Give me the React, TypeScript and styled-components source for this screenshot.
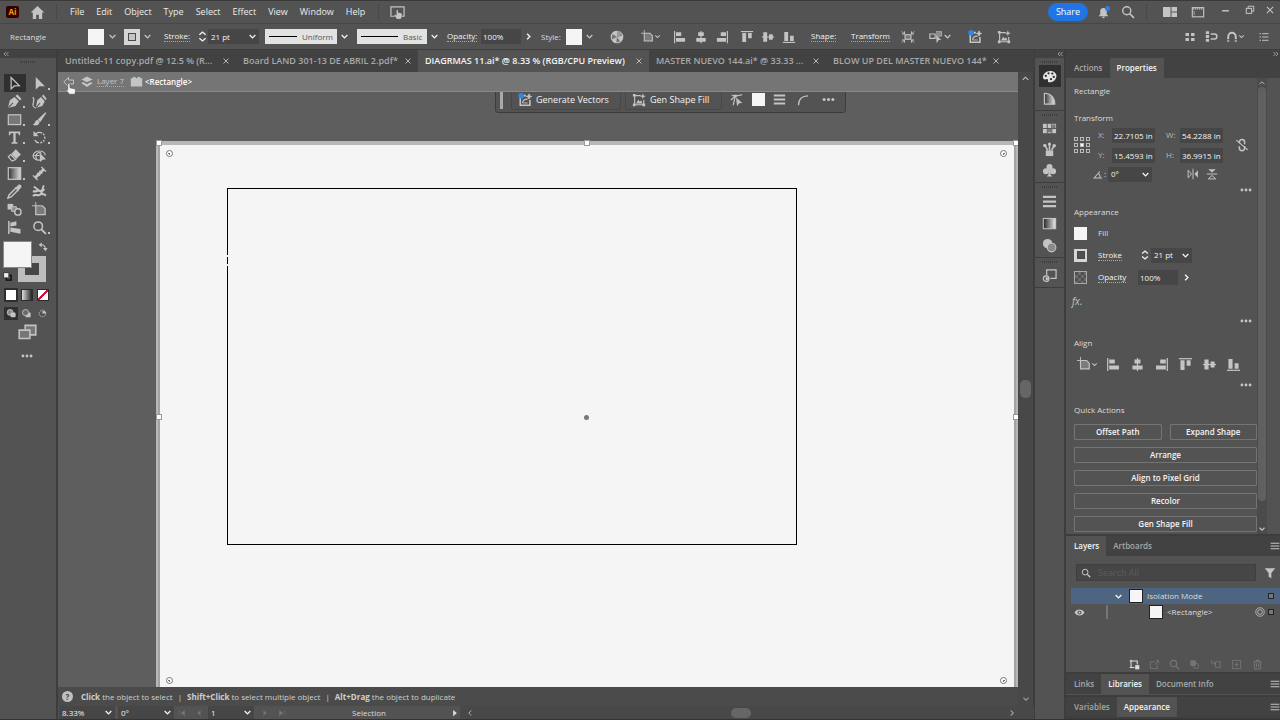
import React from "react";
import styled, { createGlobalStyle, css } from "styled-components";

const c = {
  panel: "#535353",
  bar: "#424242",
  line: "#3d3d3d",
  field: "#464646",
  pasteboard: "#5e5e5e",
  icon: "#c4c4c4",
  text: "#dcdcdc",
  dim: "#a8a8a8",
  bright: "#f4f4f4",
  paper: "#f5f5f5",
  blue: "#1f74e6",
};

const Global = createGlobalStyle`
  * { box-sizing: border-box; }
  body { margin: 0; background: ${c.line}; color: ${c.text}; font: 8px/12px "Open Sans", "Noto Sans", sans-serif; }
  button, input, select { font: inherit; color: inherit; border: 0; background: none; padding: 0; margin: 0; border-radius: 0; min-width: 0; }
  a { color: inherit; text-decoration: none; }
  svg { display: block; flex: none; }
  ul { list-style: none; margin: 0; padding: 0; }
`;

/* ---------- icons ---------- */

const s = { fill: "none", stroke: "currentColor", strokeWidth: 1.3 } as const;

const glyphs: Record<string, React.ReactNode> = {
  home: <path d="M8 1 0.8 8H3v7h3.6v-4.6h2.8V15H13V8h2.2z" fill="currentColor" />,
  touch: <><path d="M5 12H1V2h14v10h-3" {...s} /><path d="M7 5.2v6l-1.6-1-.8.8L7.4 15h4l1.2-3.4V9L8.4 8V5.2z" fill="currentColor" /></>,
  bell: <path d="M2 12.5 4 10V6.6C4 4 5.6 2.6 8 2.6S12 4 12 6.6V10l2 2.5zM6.2 13.3h3.6c0 2.2-3.6 2.2-3.6 0z" fill="currentColor" />,
  search: <><circle cx="6.6" cy="6.6" r="4.6" {...s} strokeWidth="1.6" /><path d="m10 10 4.8 4.8" {...s} strokeWidth="2" /></>,
  workspace: <path d="M1 3h7.5v10H1zM9.5 3H15v4.4H9.5zM9.5 8.6H15V13H9.5z" fill="currentColor" />,
  screen: <><rect x="1.5" y="3" width="13" height="10.5" {...s} /><path d="M2 4.5h12M3.6 7v5" {...s} strokeDasharray="1.5 .8" /></>,
  min: <path d="M2 8.5h12" {...s} strokeWidth="2.6" />,
  restore: <><path d="M5 5V2h9v8h-3" {...s} strokeWidth="1.6" /><rect x="2" y="5.4" width="8.6" height="8" {...s} strokeWidth="1.6" /></>,
  close: <path d="m3 3 10 10M13 3 3 13" {...s} strokeWidth="1.8" />,
  chev: <path d="m3 5.5 5 5 5-5" {...s} strokeWidth="2.4" />,
  chevUp: <path d="m3 10.5 5-5 5 5" {...s} strokeWidth="1.8" />,
  chevRight: <path d="m5.5 3 5 5-5 5" {...s} strokeWidth="2.4" />,
  chevLeft: <path d="m10.5 3-5 5 5 5" {...s} strokeWidth="1.8" />,
  stepper: <path d="m3.5 5.6 4.5-4 4.5 4M3.5 10.4l4.5 4 4.5-4" {...s} strokeWidth="2" />,
  dblLeft: <path d="m8 4-4 4 4 4M13 4 9 8l4 4" {...s} />,
  dblRight: <path d="m3 4 4 4-4 4M8 4l4 4-4 4" {...s} />,
  globe: <><circle cx="8" cy="8" r="6.6" fill="#777" stroke="currentColor" strokeWidth="1.3" /><path d="m8 8-5.500-4A6.800 6.800 0 0 1 8 1.200zM8 8l6.600-1.600A6.800 6.800 0 0 1 12 13.500zM8 8l-1 6.700A6.800 6.800 0 0 1 1.800 11z" fill="currentColor" /><path d="M8 8V1.200A6.800 6.800 0 0 1 14 5z" fill="#9a9a9a" /></>,
  artboard: <><path d="M4 0v4M0 4h4" {...s} strokeWidth="1" /><path d="M4 4h7l3 3v6.5H4z" fill="#7b7b7b" stroke="currentColor" strokeWidth="1.3" /></>,
  alignL: <><path d="M1.8 1v14" {...s} /><path d="M3.4 2.6h6v4.2h-6zM3.4 9h10.4v4.4H3.4z" fill="currentColor" /></>,
  alignC: <><path d="M8 1v14" {...s} /><path d="M4.8 2.6h6.4v4.2H4.8zM2.6 9h10.8v4.4H2.6z" fill="currentColor" /></>,
  alignR: <><path d="M14.2 1v14" {...s} /><path d="M6.6 2.6h6v4.2h-6zM2.2 9h10.4v4.4H2.2z" fill="currentColor" /></>,
  alignT: <><path d="M1 1.8h14" {...s} /><path d="M2.6 3.4H7v10.4H2.6zM9.2 3.4h4.2v6H9.2z" fill="currentColor" /></>,
  alignM: <><path d="M1 8h14" {...s} /><path d="M2.6 2.6H7v10.8H2.6zM9.2 4.8h4.2v6.4H9.2z" fill="currentColor" /></>,
  alignB: <><path d="M1 14.2h14" {...s} /><path d="M2.6 2.2H7v10.4H2.6zM9.2 6.6h4.2v6H9.2z" fill="currentColor" /></>,
  isolate: <><rect x="4.6" y="5.4" width="6.8" height="5.2" fill="#777" stroke="currentColor" strokeWidth="1.3" /><path d="m1 1.600 3 3M15 1.600l-3 3M1 14.400l3-3M15 14.400l-3-3M1 4.600h3v-3M15 4.600h-3v-3M1 11.400h3v3M15 11.400h-3v3" {...s} strokeWidth="1.1" /></>,
  similar: <><path d="M1 4.6h6v5H1zM8 2h6v5" {...s} /><path d="M8 2h6v6H8z" fill="#8b8b8b" /><path d="m8 6 6 5-3 .4L8.8 15z" fill="currentColor" /></>,
  generate: <><path d="M9 3H2.6v11h11V8" {...s} strokeWidth="1.8" /><path d="M5 11.4h6M12.6 1l.8 2.2 2.2.8-2.2.8-.8 2.2-.8-2.2L9.6 4l2.2-.8z" fill="currentColor" stroke="currentColor" /><path d="M5 11c1-3 3-4.400 6-4" {...s} /><circle cx="3.600" cy="3.200" r="3.200" fill="#2f86ea" /></>,
  shapeFill: <><path d="M10 3H3v10.4h10.4V8" {...s} /><path d="M1 1h3v3H1zM1 12h3v3H1zM12 12h3v3h-3z" fill="currentColor" /><path d="m4.6 12 2.6-4.4L9 10l1.4-1.6 1.6 3.6z" fill="currentColor" /><path d="m12.4.4.9 2.4 2.4.9-2.4.9-.9 2.4-.9-2.4-2.4-.9 2.4-.9z" fill="currentColor" /></>,
  snapGrid: <path d="M2 2.600h4.600v4H2zM9.400 2.600H14v4H9.400zM2 9.400h4.600v4H2zM9.400 9.400H14v4H9.400z" fill="currentColor" />,
  snapPoint: <><path d="M1 1.4h4v3.4H1zM1 6.3h4v3.4H1zM1 11.2h4v3.4H1z" fill="currentColor" /><path d="M7 5h4.6a3 3 0 0 1 0 6H7" {...s} strokeWidth="1.8" /></>,
  magnet: <><path d="M3 11V7.400a5 5 0 0 1 10 0V11" {...s} strokeWidth="2.600" /><path d="M1.700 12.400h2.600v1.800H1.700zM11.700 12.400h2.600v1.800h-2.600z" fill="currentColor" /></>,
  list: <path d="M5.5 3.6H14M5.5 8H14M5.5 12.4H14M2 3.6h2M2 8h2M2 12.4h2" {...s} />,
  menu: <path d="M1 3.6h14M1 8h14M1 12.4h14" {...s} strokeWidth="1.6" />,
  lines: <path d="M1 3h14M1 8h14M1 13h14" {...s} strokeWidth="2.4" />,
  select: <path d="M4.4 1.6v12.2l3.4-3.2 5.4-.2z" {...s} />,
  direct: <path d="M4 1v13.4l3.8-3.4 6-.2z" fill="currentColor" />,
  pen: <><path d="m1 15 2-8.4 5-3.4 4.6 4.6L9 12.8z" fill="currentColor" /><path d="m9 2.2 2-1.6 4.4 4.4-1.6 2z" fill="currentColor" /><path d="m1.4 14.6 5-5.2" stroke="#535353" strokeWidth="1.1" /></>,
  curve: <><path d="m4 15 1.6-8.4 4-3.4 4 4.6L11 12.8z" fill="currentColor" /><path d="m10.6 2.2 1.6-1.6 3.4 4.4-1.2 1.6z" fill="currentColor" /><path d="m4.4 14.6 4.2-5" stroke="#535353" strokeWidth="1.1" /><path d="M.8 3.4C3.6 5.6.8 9 1 12c.2 1.6 1.4 2.6 3 3" {...s} /></>,
  rect: <rect x="1.4" y="3" width="13.2" height="10.4" fill="#777" stroke="currentColor" strokeWidth="1.3" />,
  brush: <><path d="M14.8.8 7 8l1.8 1.8z" fill="currentColor" stroke="currentColor" strokeWidth="1.2" /><path d="M6.2 8.6C2.8 8.4 4 12.6.8 13.4c2.8 2.2 7.4.6 7.4-3z" fill="currentColor" /></>,
  type: <path d="M2 1.6h12v4h-1.2L12 3.4H9.2v9.4l2 .5v1.3H4.8v-1.3l2-.5V3.4H4l-.8 2.2H2z" fill="currentColor" />,
  rotate: <><path d="M3.4 5A5.6 5.6 0 1 1 3 10.6" {...s} strokeDasharray="8 1.4 2 1.4 2 1.4 2 1.4 2 1.4" strokeWidth="1.5" /><path d="M1.6 1v5.6h5.6z" fill="currentColor" /></>,
  eraser: <><path d="m9.4 1.4 5.4 5.4-5 5L4.4 6.4z" fill="currentColor" /><path d="m3.8 7-2.4 2.4 4 4.6 3.8-1.6z" {...s} /></>,
  shapeBuild: <><path d="M9 12.600C5 13.600 1 11.400 1.200 8.200 1.400 5 4.800 3 8 3.200c3.400 0 6 2 6 4.400" {...s} /><path d="M1.400 8H8M5.400 12.600C2.400 8.600 6.600 2 10 6" {...s} /><path d="m8 5 7 7-3.600.4L8.600 15z" fill="currentColor" /></>,
  gradient: <><defs><linearGradient id="gr"><stop offset="0" stopColor="#333" /><stop offset="1" stopColor="#ddd" /></linearGradient></defs><rect x="1.4" y="1.8" width="13.2" height="12.4" fill="url(#gr)" stroke="currentColor" strokeWidth="1.3" /></>,
  gradientRev: <><defs><linearGradient id="grr"><stop offset="0" stopColor="#222" /><stop offset="1" stopColor="#eee" /></linearGradient></defs><rect x="1.4" y="2.6" width="13.2" height="11" fill="url(#grr)" stroke="currentColor" strokeWidth="1.1" /></>,
  dimension: <><path d="m3.500 12.500 9-9" {...s} strokeWidth="3" /><path d="m1 10 5 5M10 1l5 5M5.600 7.400l3 3M7.800 5.200l3 3" {...s} strokeWidth="1.500" /></>,
  dropper: <><path d="M9.6 4.2 2.2 11.6 1 15l3.4-1.2 7.4-7.4" {...s} strokeWidth="1.6" /><path d="m8 3.6 1.6-.2L12 1c2-1.4 4.4 1 3 3l-2.4 2.4-.2 1.6z" fill="currentColor" /></>,
  puppet: <><path d="M1 13c3-3.600 5 .8 8-1.800 2-1.800 3.600 0 6 1" {...s} strokeWidth="2.200" /><path d="M1 7.600c3.400 1.400 4.400-1.600 6.800-.4 2 1 3.400.8 5.200-2" {...s} strokeWidth="2.400" /><path d="m2 2.600 5 4M12.500 1.500 9.500 11" {...s} strokeWidth="2" /></>,
  blend: <><path d="M.6 2h6v6h-6z" fill="currentColor" /><path d="M5 5h5v5H5z" fill="#8d8d8d" stroke="currentColor" /><circle cx="11.6" cy="10.6" r="3.4" fill="#535353" stroke="currentColor" strokeWidth="1.5" /></>,
  slice: <><path d="M2 1v14" {...s} strokeWidth="1.600" /><path d="M3.600 3 10 1.400v4.400L3.600 7zM3.600 8l10.800 1.600v5L3.600 12.400z" fill="currentColor" /></>,
  edit3: <><path d="M6 5V2h9v8h-5" fill="#777" stroke="currentColor" strokeWidth="1.3" /><path d="M1 6h9v7H1z" fill="#777" stroke="currentColor" strokeWidth="1.3" /></>,
  swap: <><path d="M4 4.4c5-.4 7.6 2 7.6 6.6" {...s} strokeWidth="1.8" /><path d="M6 .6v7.6L1 4.4zM8 9.6h7.4l-3.6 5z" fill="currentColor" /></>,
  defaults: <><rect x="6" y="6" width="8.4" height="8.4" fill="none" stroke="#111" strokeWidth="2.6" /><rect x="1.4" y="1.4" width="9" height="9" fill="#eee" stroke="#111" /></>,
  drawA: <><circle cx="6" cy="6.4" r="4.2" fill="#8b8b8b" stroke="currentColor" strokeWidth="1.3" /><rect x="6.6" y="6.6" width="7.4" height="7" rx="2" fill="currentColor" /></>,
  drawB: <><rect x="6.6" y="6.6" width="7.4" height="7" rx="1" fill="currentColor" /><circle cx="6.6" cy="6.6" r="4.4" fill="#6a6a6a" stroke="currentColor" strokeWidth="1.3" /></>,
  drawC: <><circle cx="8" cy="8" r="4.8" {...s} strokeDasharray="2 1" /><path d="M8 8h4.6V5L8 4z" fill="currentColor" /></>,
  dots: <><circle cx="2.6" cy="8" r="1.9" fill="currentColor" /><circle cx="8" cy="8" r="1.9" fill="currentColor" /><circle cx="13.4" cy="8" r="1.9" fill="currentColor" /></>,
  back: <path d="M7.4 2 1 8l6.4 6v-3.4H14V5.4H7.4z" {...s} />,
  layers: <path d="m8 .8 7.4 3.8L8 8.4.6 4.6zM2.8 8 .6 9.6 8 14.6l7.4-5L13.2 8 8 11z" fill="currentColor" />,
  group: <path d="M1 4h2.400V2.400h3.600V4h2V2.400h3.600V4H15v10H1z" fill="currentColor" />,
  palette: <path d="M9 2C4 2 1 5.600 1 8.600 1 10.600 2.600 12 4.400 11c1.600-.8 2.400.2 2 1.400-.4 1.400 1 2 2.800 1.600C13 13.400 15.400 10.400 15.400 7.400S12.600 2 9 2zM4 8.600a1.200 1.200 0 1 1 0-2.400 1.200 1.200 0 0 1 0 2.400zm3-2.800a1.200 1.200 0 1 1 0-2.400 1.200 1.200 0 0 1 0 2.400zm4 .2a1.200 1.200 0 1 1 0-2.400 1.200 1.200 0 0 1 0 2.400zm1.600 3.600a1.200 1.200 0 1 1 0-2.400 1.200 1.200 0 0 1 0 2.400zM9.600 12a1.200 1.200 0 1 1 0-2.400 1.200 1.200 0 0 1 0 2.400z" fill="#e4e4e4" fillRule="evenodd" />,
  guide: <><defs><linearGradient id="gg"><stop offset="0" stopColor="#333" /><stop offset="1" stopColor="#e8e8e8" /></linearGradient></defs><path d="M2.6 14V2.4C9 2.4 13.6 7 13.6 14z" fill="url(#gg)" stroke="currentColor" strokeWidth="1.3" /></>,
  swatches: <><rect x="1" y="3" width="14" height="10" fill="currentColor" /><path d="M5.6 3v10M10.4 3v10M1 8h14" stroke="#535353" /><path d="M6.2 8.6h3.6V12H6.2zM11 3.6h3.4v3.8H11z" fill="#777" /></>,
  brushes: <><path d="M4 9h8v6H4z" fill="currentColor" /><path d="M6 9 3 3M8 9V2M10 9l3-5" {...s} strokeWidth="1.7" /><circle cx="3" cy="3.6" r="1.8" fill="currentColor" /><circle cx="8" cy="2.2" r="1.7" fill="currentColor" /><circle cx="13" cy="4" r="1.9" fill="currentColor" /></>,
  club: <><circle cx="8" cy="4.2" r="3.2" fill="currentColor" /><circle cx="4.2" cy="8.8" r="3.2" fill="currentColor" /><circle cx="11.8" cy="8.8" r="3.2" fill="currentColor" /><path d="M7.2 7h1.6l.4 5.6 2 1.8H4.8l2-1.8z" fill="currentColor" /></>,
  transparency: <><circle cx="6" cy="6" r="5" fill="currentColor" /><circle cx="10.2" cy="10.2" r="4.6" fill="#8a8a8a" stroke="currentColor" strokeWidth="1.2" /></>,
  export: <><path d="M5 8V2h10v9H9" {...s} /><circle cx="4.4" cy="11.4" r="3" {...s} /><path d="m4 9 4 2.4-4 2.4z" fill="currentColor" /></>,
  refPoint: <>{[2, 8, 14].flatMap((y) => [2, 8, 14].map((x) => <rect key={`${x}-${y}`} x={x - 1.5} y={y - 1.5} width="3" height="3" fill={x === 8 && y === 8 ? "#fff" : "#535353"} stroke="currentColor" strokeWidth=".9" />))}</>,
  unlink: <><path d="M5 6V4.6a3 3 0 0 1 6 0V7M5 9.5v2a3 3 0 0 0 6 0V9" {...s} strokeWidth="1.7" /><path d="m1.5 2.5 13 11" {...s} /></>,
  angle: <><path d="M13 13H1.6L10 3.6" {...s} strokeWidth="1.5" /><path d="M7.6 6.4c2 1.4 3 3.4 3 6.6" {...s} strokeWidth="1.5" /></>,
  flipH: <><path d="M1.5 3 6 8l-4.5 5z" {...s} /><path d="M14.5 3 10 8l4.5 5z" fill="currentColor" /><path d="M8 1v14" {...s} /></>,
  flipV: <><path d="M3 1.5 8 6l5-4.5z" fill="currentColor" /><path d="M3 14.5 8 10l5 4.5z" {...s} /><path d="M1 8h14" {...s} /></>,
  eye: <><path d="M.8 8C4 2.4 12 2.4 15.2 8 12 13.6 4 13.6.8 8z" fill="#ccc" /><circle cx="8" cy="8" r="3" fill="#535353" /><circle cx="8" cy="8" r="1.4" fill="#ccc" /></>,
  filter: <path d="M1 1.6h14L9.8 8v7l-3.6-2V8z" fill="currentColor" />,
  target: <><circle cx="8" cy="8" r="6.8" {...s} /><circle cx="8" cy="8" r="3.8" {...s} /></>,
  locate: <><path d="M3 1v12M1 3h11v5M1 12.4h7" {...s} strokeWidth="1.6" /><path d="M9 9h6v6H9z" fill="currentColor" /></>,
  collect: <><path d="M9 4H2v10h10V8" {...s} /><path d="m9 8 5-6M10.5 2H14v4" {...s} /></>,
  mask: <><rect x="2" y="2" width="8" height="8" fill="currentColor" /><circle cx="10" cy="10" r="4" {...s} /></>,
  sublayer: <><path d="M2 1v5h5M5 3.6 7.6 6 5 8.4M8 4h7v8H8z" {...s} /></>,
  add: <><path d="M2 2h12v12H2zM8 5v6M5 8h6" {...s} /></>,
  trash: <path d="M2 4h12M6 4V2h4v2M3.5 4v10.5h9V4M6.5 6.5v5.5M9.5 6.5v5.5" {...s} strokeWidth="1.5" />,
  hand: <path d="M5 .8c1 0 1.6.6 1.6 1.6v4l6.2 1.2c1 .2 1.5.9 1.3 2L13.3 15H6L1.400 9.800c1-1.100 1.400-.9 2.200-.2V2.400C3.600 1.400 4 .8 5 .8z" fill="#f2f2f2" stroke="#444" strokeWidth=".7" />,
  points: <><path d="M1 8 6 3.6 14 2M6 3.6 3.6 14M2 2.6l4 1" {...s} /><path d="m7 5 7 6.4-3.6.4L8 15z" fill="currentColor" /><path d="M4.6 2h3v3h-3z" fill="currentColor" /></>,
  corner: <path d="M2 15C2 7 7 2.4 14.6 2.4" {...s} strokeWidth="1.7" />,
  first: <path d="M3 3v10M13 3 6 8l7 5z" fill="currentColor" stroke="currentColor" />,
  prev: <path d="m11 3-6 5 6 5z" fill="currentColor" />,
  next: <path d="m5 3 6 5-6 5z" fill="currentColor" />,
  last: <path d="M13 3v10M3 3l7 5-7 5z" fill="currentColor" stroke="currentColor" />,
};

const Svg = styled.svg<{ $color?: string }>`
  color: ${(p) => p.$color ?? c.icon};
`;

function Icon({ name, size = 14, color }: { name: string; size?: number; color?: string }) {
  return (
    <Svg viewBox="0 0 16 16" width={size} height={size} $color={color} aria-hidden="true">
      {glyphs[name]}
    </Svg>
  );
}

/* ---------- shared parts ---------- */

const IconButton = styled.button<{ $w?: number; $h?: number; $on?: boolean }>`
  display: flex;
  align-items: center;
  justify-content: center;
  flex: none;
  width: ${(p) => p.$w ?? 20}px;
  height: ${(p) => p.$h ?? 18}px;
  background: ${(p) => (p.$on ? "#303030" : "transparent")};
`;

const Cell = styled.div<{ $w?: number }>`
  display: flex;
  align-items: center;
  flex: none;
  width: ${(p) => (p.$w ? `${p.$w}px` : "auto")};
`;

const Swatch = styled.span<{ $size: number }>`
  flex: none;
  width: ${(p) => p.$size}px;
  height: ${(p) => p.$size}px;
  background: ${c.paper};
`;

const StrokeSwatch = styled(Swatch)`
  display: grid;
  place-items: center;
  background: #d6d6d6;
  &::after {
    content: "";
    width: 6px;
    height: 6px;
    background: ${(p) => (p.$size > 14 ? "#c4c4c4" : "#505050")};
    border: 1px solid #4a4a4a;
  }
`;

const Link = styled.a`
  color: ${c.bright};
  border-bottom: 1px dotted #aaa;
  line-height: 10px;
`;

const Field = styled.input<{ $w: number }>`
  width: ${(p) => p.$w}px;
  height: 15px;
  padding: 0 2px;
  background: ${c.field};
  color: ${c.bright};
`;

const SelectBox = styled.span<{ $w: number }>`
  display: grid;
  align-items: center;
  flex: none;
  width: ${(p) => p.$w}px;
  height: 15px;
  background: ${c.field};
  > * { grid-area: 1 / 1; }
  > svg { justify-self: end; margin-right: 2px; pointer-events: none; }
`;

const NativeSelect = styled.select`
  appearance: none;
  width: 100%;
  height: 100%;
  padding-left: 3px;
  color: ${c.bright};
`;

function Select({ label, value, width }: { label: string; value: string; width: number }) {
  return (
    <SelectBox $w={width}>
      <NativeSelect aria-label={label} defaultValue={value}>
        <option>{value}</option>
      </NativeSelect>
      <Icon name="chev" size={9} color={c.bright} />
    </SelectBox>
  );
}

/* ---------- menu bar ---------- */

const Shell = styled.div`
  display: grid;
  grid-template-rows: 24px 26px minmax(0, 1fr);
  height: 100vh;
  min-height: 560px;
  border-bottom: 1px solid #333;
  overflow: hidden;
`;

const MenuBar = styled.header`
  display: flex;
  align-items: center;
  background: ${c.panel};
  border-top: 1px solid #3a3a3a;
  border-bottom: 1px solid #464646;
  padding-left: 6px;
`;

const Logo = styled.span`
  display: grid;
  place-items: center;
  width: 13px;
  height: 12px;
  border-radius: 2px;
  background: #330000;
  color: #ff9a00;
  font-weight: 700;
`;

const Divider = styled.span<{ $m: string }>`
  width: 1px;
  height: 16px;
  margin: ${(p) => p.$m};
  background: #484848;
`;

const MenuItem = styled.button`
  padding: 0 6px;
  font-size: 9px;
  color: #ececec;
`;

const Right = styled.div`
  display: flex;
  align-items: center;
  margin-left: auto;
`;

const Share = styled.button`
  width: 40px;
  height: 18px;
  border-radius: 9px;
  background: ${c.blue};
  color: #fff;
  font-size: 9px;
`;

const BellWrap = styled.span`
  position: relative;
  &::after {
    content: "";
    position: absolute;
    top: 0;
    right: 0;
    width: 5px;
    height: 5px;
    border-radius: 50%;
    background: #2f7fe6;
  }
`;

const WindowButtons = styled.div`
  display: flex;
  align-self: flex-start;
`;

/* ---------- control bar ---------- */

const ControlBar = styled.div`
  display: flex;
  align-items: center;
  background: ${c.panel};
  border-bottom: 1px solid ${c.line};
  padding-left: 10px;
`;

const Profile = styled.span<{ $w: number }>`
  display: flex;
  align-items: center;
  flex: none;
  width: ${(p) => p.$w}px;
  height: 15px;
  padding: 0 4px;
  gap: 5px;
  background: #e2e2e2;
  &::before {
    content: "";
    flex: 1;
    height: 1px;
    background: #000;
  }
  select { appearance: none; color: #555; }
`;

/* ---------- workspace ---------- */

const Workspace = styled.div`
  display: grid;
  grid-template-columns: 56px minmax(0, 1fr) 32px 214px;
  min-height: 0;
`;

const ToolColumn = styled.aside`
  display: flex;
  flex-direction: column;
  background: ${c.panel};
`;

const Strip = styled.div<{ $end?: boolean }>`
  display: flex;
  align-items: center;
  justify-content: ${(p) => (p.$end ? "flex-end" : "flex-start")};
  flex: none;
  height: 8px;
  padding-left: 2px;
  background: ${c.bar};
`;

const Grip = styled.span`
  align-self: center;
  width: 16px;
  height: 2px;
  margin: 3px 0 2px;
  background: repeating-linear-gradient(90deg, #3e3e3e 0 1px, transparent 1px 2px);
`;

const Tools = styled.div`
  display: grid;
  grid-template-columns: 22px 22px;
  column-gap: 3px;
  justify-content: center;
  padding-top: 9px;
  margin-right: 2px;
`;

const ToolButton = styled.button<{ $on?: boolean; $more?: boolean }>`
  display: grid;
  place-items: center;
  position: relative;
  height: 18px;
  background: ${(p) => (p.$on ? "#303030" : "transparent")};
  ${(p) =>
    p.$more &&
    css`
      &::after {
        content: "";
        position: absolute;
        right: 1px;
        bottom: 2px;
        border: 1px solid ${c.icon};
      }
    `}
`;

const FillStroke = styled.div`
  position: relative;
  width: 44px;
  height: 44px;
  margin: 5px 0 0 3px;
`;

const FillChip = styled.button`
  position: absolute;
  left: 0;
  top: 0;
  width: 29px;
  height: 27px;
  background: ${c.paper};
  border: 1px solid #888;
`;

const StrokeChip = styled.button`
  position: absolute;
  left: 15px;
  top: 15px;
  width: 28px;
  height: 26px;
  background: #464646;
  border: 7px solid #bdbdbd;
`;

const ChipIcon = styled.button<{ $x: number; $y: number }>`
  position: absolute;
  left: ${(p) => p.$x}px;
  top: ${(p) => p.$y}px;
`;

const ToolRow = styled.div<{ $h: number }>`
  display: flex;
  align-items: center;
  justify-content: center;
  height: ${(p) => p.$h}px;
  padding-right: 2px;
`;

const Paint = styled.button<{ $bg: string; $on?: boolean }>`
  width: 12px;
  height: 12px;
  margin: 0 2px;
  border: 1px solid #2c2c2c;
  outline: ${(p) => (p.$on ? "1px solid #303030" : "none")};
  background: ${(p) => p.$bg};
`;

/* ---------- document ---------- */

const Document = styled.main`
  display: grid;
  grid-template-rows: 22px minmax(0, 1fr) 13px;
  min-width: 0;
  border-left: 2px solid ${c.line};
`;

const DocTabs = styled.div`
  display: flex;
  background: ${c.bar};
  overflow: hidden;
`;

const DocTab = styled.div<{ $w: number; $on?: boolean }>`
  display: flex;
  align-items: center;
  justify-content: space-between;
  flex: 0 1 ${(p) => p.$w}px;
  padding: 0 4px 1px 7px;
  background: ${(p) => (p.$on ? c.panel : "transparent")};
  color: ${(p) => (p.$on ? c.bright : c.dim)};
  font-weight: 600;
  font-size: 9px;
  white-space: nowrap;
`;

const View = styled.div`
  display: grid;
  grid-template-columns: minmax(0, 1fr) 16px;
  min-height: 0;
`;

const Sheet = styled.div`
  display: flex;
  flex-direction: column;
  min-width: 0;
  min-height: 0;
`;

const IsolationBar = styled.nav`
  display: flex;
  align-items: center;
  flex: none;
  position: relative;
  height: 20px;
  padding-left: 3px;
  background: #757575;
  border-bottom: 1px solid #8a8a8a;
  a { color: ${c.icon}; }
`;

const Crumb = styled.span`
  color: #fff;
  font-weight: 600;
  margin-left: 2px;
`;

const Pointer = styled.span`
  position: absolute;
  left: 7px;
  top: 11px;
  z-index: 2;
`;

const Canvas = styled.div`
  position: relative;
  flex: 1;
  min-height: 0;
  overflow: hidden;
  background: ${c.pasteboard};
`;

const Artboard = styled.div`
  position: absolute;
  left: 98px;
  top: 49px;
  right: 0;
  bottom: -5px;
  background: ${c.paper};
  border: solid #b9b6b9;
  border-width: 4px 2px 4px 2px;
  &::after {
    content: "";
    position: absolute;
    inset: 0;
    border: solid #a3a1a3;
    border-width: 0 2px;
  }
`;

const Shape = styled.div`
  position: absolute;
  left: 169px;
  top: 96px;
  width: 570px;
  height: 357px;
  border: 1px solid #000;
`;

const Gap = styled.span`
  position: absolute;
  left: 169px;
  top: 163px;
  width: 1px;
  height: 11px;
  background: linear-gradient(${c.paper} 0 2px, #000 2px 9px, ${c.paper} 9px);
`;

const Handle = styled.span<{ $x?: number; $y?: number; $right?: boolean }>`
  position: absolute;
  ${(p) => (p.$right ? "right: 0;" : `left: ${p.$x}px;`)}
  top: ${(p) => p.$y}px;
  width: 4px;
  height: 4px;
  background: #fff;
  outline: 1px solid #9a9a9a;
`;

const CornerDot = styled.span<{ $right?: boolean; $bottom?: boolean }>`
  position: absolute;
  ${(p) => (p.$right ? "right: 11px;" : "left: 108px;")}
  ${(p) => (p.$bottom ? "bottom: 3px;" : "top: 58px;")}
  width: 7px;
  height: 7px;
  border: 1px solid #777;
  border-radius: 50%;
  background: radial-gradient(circle, #777 0 1px, #fff 1px);
`;

const Center = styled.span`
  position: absolute;
  left: 526px;
  top: 323px;
  width: 5px;
  height: 5px;
  border-radius: 50%;
  background: #777;
`;

const TaskBar = styled.div`
  position: absolute;
  left: 437px;
  top: -6px;
  display: flex;
  align-items: center;
  width: 351px;
  height: 27px;
  padding-left: 4px;
  background: ${c.panel};
  border: 1px solid #3c3c3c;
  border-radius: 3px;
`;

const TaskGrip = styled.span`
  width: 3px;
  height: 18px;
  margin-right: 8px;
  background: #aaa;
`;

const TaskButton = styled.button<{ $w: number }>`
  display: flex;
  align-items: center;
  gap: 4px;
  flex: none;
  width: ${(p) => p.$w}px;
  height: 20px;
  margin-right: 4px;
  padding-left: 6px;
  border: 1px solid #474747;
  border-radius: 2px;
  color: ${c.bright};
  font-size: 9px;
  white-space: nowrap;
`;

const VScroll = styled.div`
  display: flex;
  flex-direction: column;
  align-items: center;
  justify-content: space-between;
  padding: 2px 0 3px;
  background: #484848;
  border-right: 1px solid ${c.line};
`;

const Thumb = styled.span<{ $w: number; $h: number }>`
  width: ${(p) => p.$w}px;
  height: ${(p) => p.$h}px;
  border-radius: 5px;
  background: #666;
`;

const Hints = styled.div`
  display: flex;
  align-items: center;
  flex: none;
  gap: 5px;
  height: 19px;
  padding-left: 4px;
  background: #4b4b4b;
  color: #cfcfcf;
  white-space: nowrap;
  b { font-weight: 700; }
`;

const Help = styled.button`
  width: 11px;
  height: 11px;
  margin-right: 3px;
  border-radius: 50%;
  background: #c0c0c0;
  color: #444;
  font-weight: 700;
  line-height: 11px;
`;

const Status = styled.div`
  display: flex;
  align-items: center;
  padding-left: 1px;
  background: ${c.panel};
  overflow: hidden;
`;

const Mode = styled.span`
  flex: 0 0 162px;
  text-align: center;
`;

const HScroll = styled.div`
  display: flex;
  align-items: center;
  justify-content: space-between;
  flex: 1;
  height: 100%;
  padding: 0 18px 0 6px;
  background: #484848;
`;

/* ---------- dock ---------- */

const Dock = styled.aside`
  display: flex;
  flex-direction: column;
  background: ${c.panel};
  border-left: 1px solid ${c.line};
  border-right: 2px solid ${c.line};
`;

const DockGroup = styled.div`
  display: flex;
  flex-direction: column;
  align-items: center;
  padding-bottom: 1px;
  border-bottom: 1px solid ${c.line};
`;

/* ---------- panels ---------- */

const Panels = styled.aside`
  display: grid;
  grid-template-rows: 8px minmax(0, 1fr) 138px 23px 22px;
  min-width: 0;
  background: ${c.line};
`;

const Panel = styled.section`
  display: flex;
  flex-direction: column;
  min-height: 0;
  margin-bottom: 2px;
  background: ${c.panel};
  overflow: hidden;
`;

const TabRow = styled.div`
  display: flex;
  flex: none;
  height: 20px;
  background: ${c.bar};
`;

const Tab = styled.button<{ $on?: boolean }>`
  padding: 0 7px;
  font-weight: 600;
  color: ${(p) => (p.$on ? c.bright : c.dim)};
  background: ${(p) => (p.$on ? c.panel : "transparent")};
  &:first-child { padding-left: 8px; }
`;

const PropBody = styled.div`
  display: flex;
  flex: 1;
  min-height: 0;
  padding-right: 13px;
`;

const PropContent = styled.div`
  flex: 1;
  min-width: 0;
  padding-left: 8px;
  overflow: hidden;
`;

const PropScroll = styled.div`
  display: flex;
  flex-direction: column;
  align-items: center;
  width: 10px;
  padding: 1px 0;
  background: #4b4b4b;
`;

const PropThumb = styled.span`
  flex: 1;
  width: 8px;
  margin-bottom: 24px;
  border-radius: 4px;
  background: #606060;
`;

const Row = styled.div<{ $h: number }>`
  display: flex;
  align-items: center;
  height: ${(p) => p.$h}px;
`;

const Heading = styled.h2`
  margin: 7px 0 0;
  height: 15px;
  font: inherit;
  line-height: 15px;
`;

const MoreRow = styled.div`
  display: flex;
  justify-content: flex-end;
  height: 14px;
  padding-right: 3px;
`;

const Actions = styled.div`
  display: grid;
  grid-template-columns: 1fr 1fr;
  gap: 7px 8px;
  margin-top: 7px;
`;

const Action = styled.button<{ $wide?: boolean }>`
  grid-column: ${(p) => (p.$wide ? "1 / -1" : "auto")};
  height: 16px;
  border: 1px solid #747474;
  border-radius: 1px;
  color: ${c.bright};
  font-weight: 600;
`;

const TransformRow = styled.div`
  display: flex;
  align-items: center;
  label { width: 14px; color: #bbb; }
`;

const TransformBlock = styled.div`
  display: flex;
  align-items: center;
  height: 40px;
  gap: 8px;
`;

const TransformCol = styled.div`
  display: flex;
  flex-direction: column;
  gap: 5px;
  & + & { margin-left: 3px; }
`;

const Opaque = styled.span`
  width: 13px;
  height: 13px;
  border: 1px solid #aaa;
  background: repeating-conic-gradient(#6a6a6a 0 25%, #505050 0 50%) 0 0 / 6px 6px;
`;

const Fx = styled.button`
  font-style: italic;
  font-size: 10px;
  margin-left: -2px;
  color: ${c.icon};
`;

const SearchRow = styled.div`
  display: flex;
  align-items: center;
  justify-content: space-between;
  padding: 8px 4px 7px 10px;
`;

const SearchBox = styled.label`
  display: flex;
  align-items: center;
  width: 180px;
  height: 17px;
  padding-left: 4px;
  gap: 7px;
  background: ${c.field};
  border: 1px solid #3f3f3f;
  input { flex: 1; font-size: 9px; }
  input::placeholder { color: #5c5c5c; opacity: 1; }
`;

const LayerItem = styled.li<{ $on?: boolean }>`
  display: flex;
  align-items: center;
  height: 16px;
  margin-left: 5px;
  padding-right: 6px;
  background: ${(p) => (p.$on ? "#4d6580" : "transparent")};
`;

const LayerThumb = styled.span`
  width: 14px;
  height: 14px;
  margin-right: 4px;
  background: ${c.paper};
  border: 1px solid #222;
`;

const Square = styled.span`
  width: 6px;
  height: 6px;
  background: #777;
  border: 1px solid #222;
`;

const LayerBar = styled.span`
  width: 2px;
  height: 14px;
  margin: 0 41px 0 19px;
  background: #777;
`;

const LayerFoot = styled.div`
  display: flex;
  align-items: center;
  justify-content: flex-end;
  height: 14px;
  margin-top: auto;
  margin-bottom: 1px;
  padding-right: 12px;
`;

const Spacer = styled.span`
  flex: 1;
`;

/* ---------- data ---------- */

const menus = ["File", "Edit", "Object", "Type", "Select", "Effect", "View", "Window", "Help"];

const docs = [
  { name: "Untitled-11 copy.pdf @ 12.5 % (R...", w: 178 },
  { name: "Board LAND 301-13 DE ABRIL 2.pdf*", w: 182 },
  { name: "DIAGRMAS 11.ai* @ 8.33 % (RGB/CPU Preview)", w: 231, on: true },
  { name: "MASTER NUEVO 144.ai* @ 33.33 ...", w: 177 },
  { name: "BLOW UP DEL MASTER NUEVO 144*", w: 180 },
];

const tools: [string, boolean][] = [
  ["select", false], ["direct", true], ["pen", true], ["curve", false], ["rect", true], ["brush", true],
  ["type", true], ["rotate", true], ["eraser", true], ["shapeBuild", false], ["gradient", true], ["dimension", false],
  ["dropper", false], ["puppet", false], ["blend", false], ["artboard", false], ["slice", false], ["search", true],
];

const alignX = ["alignL", "alignC", "alignR"];
const alignY = ["alignT", "alignM", "alignB"];

const dockGroups = [["palette", "guide"], ["swatches", "brushes", "club"], ["lines", "gradientRev", "transparency"], ["export"]];

const layerTools = ["locate", "collect", "search", "mask", "sublayer", "add", "trash"];

const tabPanels = [
  { tabs: ["Links", "Libraries", "Document Info"], on: "Libraries" },
  { tabs: ["Variables", "Appearance"], on: "Appearance" },
];

/* ---------- sections ---------- */

function TopMenu() {
  return (
    <MenuBar>
      <Logo>Ai</Logo>
      <IconButton $w={37} aria-label="Home"><Icon name="home" size={15} /></IconButton>
      <Divider $m="0 7px 0 0" />
      {menus.map((m) => <MenuItem key={m}>{m}</MenuItem>)}
      <Divider $m="0 7px" />
      <IconButton $w={22} aria-label="Touch workspace"><Icon name="touch" size={15} /></IconButton>
      <Right>
        <Share>Share</Share>
        <IconButton $w={30} aria-label="Notifications"><BellWrap><Icon name="bell" size={13} /></BellWrap></IconButton>
        <IconButton aria-label="Search"><Icon name="search" /></IconButton>
        <Divider $m="0 8px" />
        <IconButton $w={30} aria-label="Arrange documents"><Icon name="workspace" size={16} /></IconButton>
        <IconButton $w={26} aria-label="Workspace"><Icon name="screen" size={14} /></IconButton>
        <WindowButtons>
          <IconButton $w={29} $h={15} aria-label="Minimize"><Icon name="min" size={9} /></IconButton>
          <IconButton $w={20} $h={13} aria-label="Restore"><Icon name="restore" size={10} /></IconButton>
          <IconButton $w={20} $h={13} aria-label="Close"><Icon name="close" size={10} /></IconButton>
        </WindowButtons>
      </Right>
    </MenuBar>
  );
}

function Controls() {
  return (
    <ControlBar>
      <Cell $w={78}>Rectangle</Cell>
      <Cell $w={36}><Swatch $size={16} /><IconButton $w={16} aria-label="Fill color"><Icon name="chev" size={9} /></IconButton></Cell>
      <Cell $w={40}><StrokeSwatch $size={16} /><IconButton $w={15} aria-label="Stroke color"><Icon name="chev" size={9} /></IconButton></Cell>
      <Cell $w={33}><Link href="#stroke">Stroke:</Link></Cell>
      <Cell $w={11}><Icon name="stepper" size={11} color={c.bright} /></Cell>
      <Cell $w={57}><Select label="Stroke weight" value="21 pt" width={51} /></Cell>
      <Cell $w={92}>
        <Profile $w={72}><select aria-label="Width profile"><option>Uniform</option></select></Profile>
        <IconButton $w={14} aria-label="Profiles"><Icon name="chev" size={9} color={c.bright} /></IconButton>
      </Cell>
      <Cell $w={90}>
        <Profile $w={70}><select aria-label="Brush definition"><option>Basic</option></select></Profile>
        <IconButton $w={14} aria-label="Brushes"><Icon name="chev" size={9} color={c.bright} /></IconButton>
      </Cell>
      <Cell $w={34}><Link href="#opacity">Opacity:</Link></Cell>
      <Cell $w={60}><Field $w={40} aria-label="Opacity" defaultValue="100%" /><IconButton $w={14} aria-label="More opacity"><Icon name="chevRight" size={9} color={c.bright} /></IconButton></Cell>
      <Cell $w={25}>Style:</Cell>
      <Cell $w={42}><Swatch $size={16} /><IconButton $w={14} aria-label="Style"><Icon name="chev" size={9} /></IconButton></Cell>
      <Cell $w={33}><IconButton $w={18} aria-label="Recolor artwork"><Icon name="globe" /></IconButton></Cell>
      <Cell $w={28}><IconButton aria-label="Align to"><Icon name="artboard" size={13} /><Icon name="chev" size={7} /></IconButton></Cell>
      {alignX.map((a) => <IconButton key={a} $w={21} aria-label={a}><Icon name={a} /></IconButton>)}
      <Cell $w={4} />
      {alignY.map((a) => <IconButton key={a} $w={21} aria-label={a}><Icon name={a} /></IconButton>)}
      <Cell $w={12} />
      <Cell $w={40}><Link href="#shape">Shape:</Link></Cell>
      <Cell $w={46}><Link href="#transform">Transform</Link></Cell>
      <IconButton $w={22} aria-label="Isolate"><Icon name="isolate" /></IconButton>
      <IconButton $w={42} aria-label="Select similar"><Icon name="similar" size={14} /><Icon name="chev" size={9} /></IconButton>
      <IconButton $w={28} aria-label="Generate"><Icon name="generate" /></IconButton>
      <IconButton $w={30} aria-label="Gen Shape Fill"><Icon name="shapeFill" /></IconButton>
      <Right>
        <IconButton aria-label="Snap to grid"><Icon name="snapGrid" size={12} /></IconButton>
        <IconButton $w={22} aria-label="Snap to point"><Icon name="snapPoint" size={13} /></IconButton>
        <IconButton $w={26} aria-label="Snap"><Icon name="magnet" size={12} /><Icon name="chev" size={7} /></IconButton>
        <IconButton $w={32} aria-label="Options"><Icon name="list" size={12} /></IconButton>
      </Right>
    </ControlBar>
  );
}

function Toolbox() {
  return (
    <ToolColumn>
      <Strip><Icon name="dblLeft" size={8} /></Strip>
      <Grip />
      <Tools>
        {tools.map(([name, more], i) => (
          <ToolButton key={name} $on={i === 0} $more={more} aria-label={name}><Icon name={name} size={15} /></ToolButton>
        ))}
      </Tools>
      <FillStroke>
        <StrokeChip aria-label="Stroke" />
        <FillChip aria-label="Fill" />
        <ChipIcon $x={35} $y={1} aria-label="Swap fill and stroke"><Icon name="swap" size={10} /></ChipIcon>
        <ChipIcon $x={0} $y={31} aria-label="Default fill and stroke"><Icon name="defaults" size={9} /></ChipIcon>
      </FillStroke>
      <ToolRow $h={20}>
        <Paint $bg="#fff" $on aria-label="Color" />
        <Paint $bg="linear-gradient(90deg, #ddd, #222)" aria-label="Gradient" />
        <Paint $bg="linear-gradient(135deg, #fff 42%, #d0103a 42% 58%, #fff 58%)" aria-label="None" />
      </ToolRow>
      <ToolRow $h={17}>
        <IconButton $w={14} $h={13} $on aria-label="Draw normal"><Icon name="drawA" size={11} /></IconButton>
        <IconButton $w={17} aria-label="Draw behind"><Icon name="drawB" size={11} /></IconButton>
        <IconButton $w={15} aria-label="Draw inside"><Icon name="drawC" size={11} /></IconButton>
      </ToolRow>
      <ToolRow $h={21}><IconButton aria-label="Screen mode"><Icon name="edit3" size={19} /></IconButton></ToolRow>
      <ToolRow $h={26}><IconButton aria-label="Edit toolbar"><Icon name="dots" size={12} /></IconButton></ToolRow>
    </ToolColumn>
  );
}

function DocumentArea() {
  return (
    <Document>
      <DocTabs>
        {docs.map((d) => (
          <DocTab key={d.name} $w={d.w} $on={d.on}>
            {d.name}
            <IconButton $w={12} aria-label="Close tab"><Icon name="close" size={8} /></IconButton>
          </DocTab>
        ))}
      </DocTabs>
      <View>
        <Sheet>
          <IsolationBar>
            <IconButton $w={16} aria-label="Back"><Icon name="back" size={12} /></IconButton>
            <IconButton $w={20} aria-label="Layers"><Icon name="layers" size={12} /></IconButton>
            <Cell $w={33}><Link href="#layer">Layer 7</Link></Cell>
            <Icon name="group" size={13} />
            <Crumb>&lt;Rectangle&gt;</Crumb>
            <Pointer><Icon name="hand" size={12} /></Pointer>
          </IsolationBar>
          <Canvas>
            <Artboard />
            <Shape />
            <Gap />
            <Center />
            <CornerDot />
            <CornerDot $right />
            <CornerDot $bottom />
            <CornerDot $right $bottom />
            <Handle $x={99} $y={49} />
            <Handle $x={527} $y={49} />
            <Handle $right $y={49} />
            <Handle $x={99} $y={323} />
            <Handle $right $y={323} />
            <TaskBar>
              <TaskGrip />
              <TaskButton $w={110}><Icon name="generate" />Generate Vectors</TaskButton>
              <TaskButton $w={97}><Icon name="shapeFill" />Gen Shape Fill</TaskButton>
              <IconButton $w={22} aria-label="Edit points"><Icon name="points" /></IconButton>
              <IconButton aria-label="Fill"><Swatch $size={13} /></IconButton>
              <IconButton $w={22} aria-label="Stroke"><Icon name="lines" size={13} /></IconButton>
              <IconButton $w={26} aria-label="Corner"><Icon name="corner" size={12} /></IconButton>
              <IconButton $w={24} aria-label="More"><Icon name="dots" size={13} /></IconButton>
            </TaskBar>
          </Canvas>
          <Hints>
            <Help aria-label="Help">?</Help>
            <span><b>Click</b> the object to select</span>|
            <span><b>Shift+Click</b> to select multiple object</span>|
            <span><b>Alt+Drag</b> the object to duplicate</span>
          </Hints>
        </Sheet>
        <VScroll>
          <Icon name="chevUp" size={9} />
          <Thumb $w={11} $h={18} />
          <Icon name="chev" size={8} color="#999" />
        </VScroll>
      </View>
      <Status>
        <Select label="Zoom" value="8.33%" width={56} />
        <Cell $w={3} />
        <Select label="Rotate" value="0°" width={56} />
        <IconButton $w={16} aria-label="First"><Icon name="first" size={8} color="#777" /></IconButton>
        <IconButton $w={18} aria-label="Previous"><Icon name="prev" size={8} color="#777" /></IconButton>
        <Select label="Artboard" value="1" width={46} />
        <IconButton $w={22} aria-label="Next"><Icon name="next" size={8} color="#777" /></IconButton>
        <IconButton $w={12} aria-label="Last"><Icon name="last" size={8} color="#777" /></IconButton>
        <Mode>Selection</Mode>
        <IconButton $w={10} aria-label="Status menu"><Icon name="next" size={10} color="#ddd" /></IconButton>
        <HScroll>
          <Icon name="chevLeft" size={8} />
          <Thumb $w={20} $h={10} />
          <Icon name="chevRight" size={8} color="#999" />
        </HScroll>
      </Status>
    </Document>
  );
}

function SideDock() {
  return (
    <Dock>
      <Strip $end><Icon name="dblLeft" size={8} /></Strip>
      {dockGroups.map((g, i) => (
        <DockGroup key={i}>
          <Grip />
          {g.map((name) => (
            <IconButton key={name} $w={22} $h={i % 2 ? 21 : 22} $on={name === "palette"} aria-label={name}>
              <Icon name={name} size={15} />
            </IconButton>
          ))}
        </DockGroup>
      ))}
    </Dock>
  );
}

function TransformField({ id, label, value }: { id: string; label: string; value: string }) {
  return (
    <TransformRow>
      <label htmlFor={id}>{label}</label>
      <Field id={id} $w={43} defaultValue={value} />
    </TransformRow>
  );
}

function More() {
  return <MoreRow><IconButton $w={16} $h={14} aria-label="More options"><Icon name="dots" size={12} /></IconButton></MoreRow>;
}

function Properties() {
  return (
    <Panel>
      <TabRow>
        <Tab>Actions</Tab>
        <Tab $on>Properties</Tab>
      </TabRow>
      <PropBody>
        <PropContent>
          <Row $h={25}>Rectangle</Row>
          <Heading>Transform</Heading>
          <TransformBlock>
            <Icon name="refPoint" size={16} />
            <TransformCol>
              <TransformField id="x" label="X:" value="22.7105 in" />
              <TransformField id="y" label="Y:" value="15.4593 in" />
            </TransformCol>
            <TransformCol>
              <TransformField id="w" label="W:" value="54.2288 in" />
              <TransformField id="h" label="H:" value="36.9915 in" />
            </TransformCol>
            <IconButton $w={22} aria-label="Constrain proportions"><Icon name="unlink" /></IconButton>
          </TransformBlock>
          <Row $h={18}>
            <Cell $w={19} />
            <Cell $w={15}><Icon name="angle" size={11} />:</Cell>
            <Cell $w={76}><Select label="Angle" value="0°" width={44} /></Cell>
            <IconButton $w={18} aria-label="Flip horizontal"><Icon name="flipH" size={12} /></IconButton>
            <IconButton aria-label="Flip vertical"><Icon name="flipV" size={12} /></IconButton>
          </Row>
          <More />
          <Heading>Appearance</Heading>
          <Row $h={3} />
          <Row $h={22}><Cell $w={24}><Swatch $size={13} /></Cell>Fill</Row>
          <Row $h={22}>
            <Cell $w={24}><StrokeSwatch $size={13} /></Cell>
            <Cell $w={42}><Link href="#stroke-panel">Stroke</Link></Cell>
            <Cell $w={11}><Icon name="stepper" size={10} color={c.bright} /></Cell>
            <Select label="Stroke width" value="21 pt" width={41} />
          </Row>
          <Row $h={22}>
            <Cell $w={24}><Opaque /></Cell>
            <Cell $w={40}><Link href="#opacity-panel">Opacity</Link></Cell>
            <Field $w={40} aria-label="Opacity value" defaultValue="100%" />
            <IconButton $w={16} aria-label="Opacity slider"><Icon name="chevRight" size={9} color={c.bright} /></IconButton>
          </Row>
          <Row $h={26}><Fx>fx.</Fx></Row>
          <More />
          <Heading>Align</Heading>
          <Row $h={28}>
            <IconButton $w={27} aria-label="Align to artboard"><Icon name="artboard" size={14} /><Icon name="chev" size={7} /></IconButton>
            {[...alignX, ...alignY].map((a) => <IconButton key={a} $w={24} aria-label={a}><Icon name={a} size={15} /></IconButton>)}
          </Row>
          <More />
          <Row $h={3} />
          <Heading>Quick Actions</Heading>
          <Actions>
            <Action>Offset Path</Action>
            <Action>Expand Shape</Action>
            <Action $wide>Arrange</Action>
            <Action $wide>Align to Pixel Grid</Action>
            <Action $wide>Recolor</Action>
            <Action $wide>Gen Shape Fill</Action>
          </Actions>
        </PropContent>
        <PropScroll>
          <Icon name="chevUp" size={8} />
          <PropThumb />
          <Icon name="chev" size={8} />
        </PropScroll>
      </PropBody>
    </Panel>
  );
}

function Layers() {
  return (
    <Panel>
      <TabRow>
        <Tab $on>Layers</Tab>
        <Tab>Artboards</Tab>
        <Spacer />
        <IconButton $w={11} $h={20} aria-label="Layers menu"><Icon name="menu" size={10} /></IconButton>
      </TabRow>
      <SearchRow>
        <SearchBox><Icon name="search" size={10} /><input type="search" aria-label="Search layers" placeholder="Search All" /></SearchBox>
        <IconButton $w={12} $h={17} aria-label="Filter"><Icon name="filter" size={12} /></IconButton>
      </SearchRow>
      <ul>
        <LayerItem $on>
          <Cell $w={36} />
          <IconButton $w={22} $h={16} aria-label="Collapse"><Icon name="chev" size={9} color={c.bright} /></IconButton>
          <LayerThumb />Isolation Mode<Spacer /><Square />
        </LayerItem>
        <LayerItem>
          <IconButton $w={16} $h={16} aria-label="Toggle visibility"><Icon name="eye" size={11} /></IconButton>
          <LayerBar /><LayerThumb />&lt;Rectangle&gt;<Spacer />
          <IconButton $w={16} $h={16} aria-label="Target"><Icon name="target" size={10} /></IconButton><Square />
        </LayerItem>
      </ul>
      <LayerFoot>
        {layerTools.map((t, i) => (
          <IconButton key={t} $w={i < 3 ? 20 : 21} $h={14} aria-label={t}><Icon name={t} size={11} color={i ? "#757575" : "#ddd"} /></IconButton>
        ))}
      </LayerFoot>
    </Panel>
  );
}

export default function App() {
  return (
    <Shell>
      <Global />
      <TopMenu />
      <Controls />
      <Workspace>
        <Toolbox />
        <DocumentArea />
        <SideDock />
        <Panels>
          <Strip $end><Icon name="dblRight" size={8} /></Strip>
          <Properties />
          <Layers />
          {tabPanels.map((p) => (
            <Panel key={p.on}>
              <TabRow>
                {p.tabs.map((t) => <Tab key={t} $on={t === p.on}>{t}</Tab>)}
                <Spacer />
                <IconButton $w={11} $h={20} aria-label="Panel menu"><Icon name="menu" size={10} /></IconButton>
              </TabRow>
            </Panel>
          ))}
        </Panels>
      </Workspace>
    </Shell>
  );
}
